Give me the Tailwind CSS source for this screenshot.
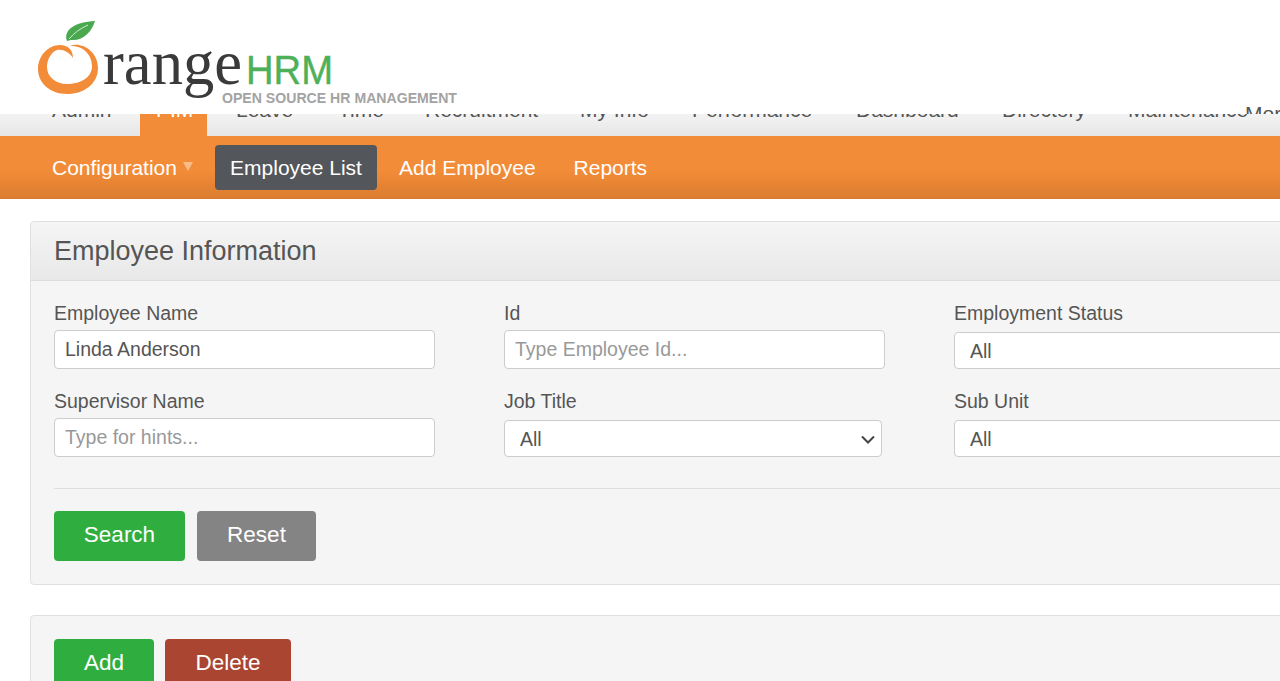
<!DOCTYPE html>
<html><head><meta charset="utf-8"><script src="https://cdn.jsdelivr.net/npm/@tailwindcss/browser@4"></script></head>
<body class="bg-white overflow-hidden">
<div class="w-[1280px] h-[681px] overflow-hidden font-['Liberation_Sans',Arial,sans-serif] text-[19.5px] text-[#555]">
  <header class="relative z-10 h-[114px] bg-white overflow-hidden">
    <svg class="block" width="480" height="114" viewBox="0 0 480 114" aria-label="OrangeHRM logo">
      <path fill="#f28c38" d="M70 46C80 41 98 50 98 68C98 84 84 94 67 94C50 94 38 83 38 69C38 56 48 45 60 45C68 45 73 50 73 58C69 52 63 49 57 50C51 52 47 60 47 67C47 77 56 84 67 84C80 84 92 78 92 66C92 54 82 45 70 46Z"/>
      <path fill="#4aa84f" d="M67 41C63 30 75 22 95 21C92 31 84 41 71 40Z"/>
      <path stroke="#d5ecd2" stroke-width="1" fill="none" d="M69 39C74 33 81 28 88 25"/>
      <text x="103" y="84" font-family="'Liberation Serif',serif" font-size="64" fill="#3a3a3a" textLength="139" lengthAdjust="spacingAndGlyphs">range</text>
      <text x="246" y="84" font-family="'Liberation Sans',sans-serif" font-size="40" fill="#4fb05a" stroke="#4fb05a" stroke-width="0.4" textLength="87" lengthAdjust="spacingAndGlyphs">HRM</text>
      <text x="222" y="103" font-family="'Liberation Sans',sans-serif" font-weight="700" font-size="14" fill="#a3a3a3" textLength="235" lengthAdjust="spacingAndGlyphs">OPEN SOURCE HR MANAGEMENT</text>
    </svg>
    <a class="absolute left-[1245px] top-[102px] text-[21px] leading-[23px] text-[#555]">More</a>
  </header>
  <nav class="h-[22px] overflow-hidden flex bg-gradient-to-b from-[#f3f3f3] to-[#e6e6e6] pl-[52px] text-[21px] leading-[23px] text-[#555]">
    <a class="-mt-[16px] w-[88px]">Admin</a>
    <a class="w-[67px] h-[22px] mr-[29px] bg-[#f28c38] text-white relative overflow-hidden"><span class="absolute left-[16px] -top-[16px]">PIM</span></a>
    <a class="-mt-[16px] w-[102px]">Leave</a>
    <a class="-mt-[16px] w-[87px]">Time</a>
    <a class="-mt-[16px] w-[155px]">Recruitment</a>
    <a class="-mt-[16px] w-[112px]">My Info</a>
    <a class="-mt-[16px] w-[164px]">Performance</a>
    <a class="-mt-[16px] w-[146px]">Dashboard</a>
    <a class="-mt-[16px] w-[126px]">Directory</a>
    <a class="-mt-[16px] whitespace-nowrap">Maintenance</a>
  </nav>
  <div class="h-[63px] flex items-center bg-[linear-gradient(#f28c38_0%,#f28c38_55%,#dc7d30_96%,#d97a2c_100%)] text-[21px] text-white">
    <a class="ml-[52px] w-[163px] flex items-center gap-[6px]">Configuration
      <svg width="10" height="9" viewBox="0 0 10 9" fill="#f7bb88" class="-mt-[3px]"><path d="M0 0H10L5 9Z"/></svg>
    </a>
    <a class="bg-[#53565a] rounded-[4px] h-[45px] w-[162px] flex items-center justify-center pt-[1px]">Employee List</a>
    <a class="ml-[22px] pt-[1px]">Add Employee</a>
    <a class="ml-[38px] pt-[1px]">Reports</a>
  </div>
  <section class="ml-[30px] mt-[22px] w-[1400px] h-[364px] bg-[#f5f5f5] border border-[#e0e0e0] rounded-[4px]">
    <div class="h-[59px] px-[23px] flex items-center bg-gradient-to-b from-[#f5f5f5] to-[#e8e8e8] border-b border-[#dddddd] rounded-t-[4px] text-[27px]">Employee Information</div>
    <div class="px-[23px]">
      <div class="h-[208px] border-b border-[#dedede] grid grid-cols-[450px_450px_450px] grid-rows-[88px_88px] pt-[20px]">
        <label class="block">
          <span class="block h-[29px] leading-[24px]">Employee Name</span>
          <input class="block w-[381px] h-[39px] bg-white border border-[#cccccc] rounded-[4px] px-[10px] text-[#555]" value="Linda Anderson">
        </label>
        <label class="block">
          <span class="block h-[29px] leading-[24px]">Id</span>
          <input class="block w-[381px] h-[39px] bg-white border border-[#cccccc] rounded-[4px] px-[10px] placeholder:text-[#999]" placeholder="Type Employee Id...">
        </label>
        <label class="block">
          <span class="block h-[31px] leading-[24px]">Employment Status</span>
          <span class="flex items-center w-[378px] h-[37px] leading-[24px] pt-[1px] bg-white border border-[#cccccc] rounded-[4px] pl-[15px]">All</span>
        </label>
        <label class="block">
          <span class="block h-[29px] leading-[24px]">Supervisor Name</span>
          <input class="block w-[381px] h-[39px] bg-white border border-[#cccccc] rounded-[4px] px-[10px] placeholder:text-[#999]" placeholder="Type for hints...">
        </label>
        <label class="block">
          <span class="block h-[31px] leading-[24px]">Job Title</span>
          <span class="flex items-center justify-between w-[378px] h-[37px] leading-[24px] pt-[1px] bg-white border border-[#cccccc] rounded-[4px] pl-[15px] pr-[6px]">All
            <svg width="14" height="9" viewBox="0 0 14 9" fill="none" stroke="#444" stroke-width="2"><path d="M1 1.5L7 7.5L13 1.5"/></svg>
          </span>
        </label>
        <label class="block">
          <span class="block h-[31px] leading-[24px]">Sub Unit</span>
          <span class="flex items-center w-[378px] h-[37px] leading-[24px] pt-[1px] bg-white border border-[#cccccc] rounded-[4px] pl-[15px]">All</span>
        </label>
      </div>
      <div class="flex gap-[12px] pt-[22px] text-[22.5px] text-white">
        <button class="w-[131px] h-[50px] pb-[2px] bg-[#2fae3f] rounded-[4px]">Search</button>
        <button class="w-[119px] h-[50px] pb-[2px] bg-[#848484] rounded-[4px]">Reset</button>
      </div>
    </div>
  </section>
  <section class="ml-[30px] mt-[30px] w-[1400px] h-[200px] bg-[#f5f5f5] border border-[#e0e0e0] rounded-[4px] px-[23px] pt-[23px]">
    <div class="flex gap-[11px] text-[22.5px] text-white">
      <button class="w-[100px] h-[50px] pb-[2px] bg-[#2fae3f] rounded-[4px]">Add</button>
      <button class="w-[126px] h-[50px] pb-[2px] bg-[#a94531] rounded-[4px]">Delete</button>
    </div>
  </section>
</div>
</body></html>
